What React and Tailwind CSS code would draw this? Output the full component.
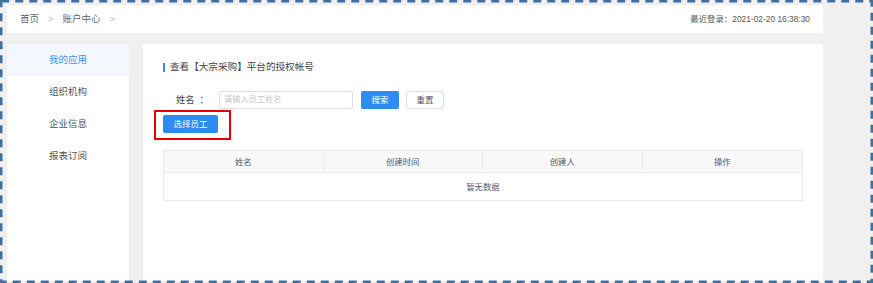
import React from "react";

const font = "font-['Liberation_Sans','Noto_Sans_CJK_SC',sans-serif]";

export default function App() {
  const menu = ["我的应用", "组织机构", "企业信息", "报表订阅"];
  const cols = ["姓名", "创建时间", "创建人", "操作"];
  return (
    <div className={`${font} relative w-[873px] h-[283px] bg-[#f0f0f0] overflow-hidden flex flex-col pl-[7px] pt-[5px] pr-[50px] pb-[2px]`}>
      {/* header */}
      <div className="h-[28px] bg-white flex items-center justify-between pl-[13px] pr-[13px] shrink-0">
        <div className="flex items-center text-[9.5px] leading-[12px] text-[#666]">
          <span>首页</span>
          <span className="mx-[9px] text-[#bbb]">&gt;</span>
          <span>账户中心</span>
          <span className="mx-[9px] text-[#bbb]">&gt;</span>
        </div>
        <div className="text-[8.4px] leading-[12px] text-[#555]">最近登录：2021-02-20 16:38:30</div>
      </div>

      <div className="flex flex-1 mt-[11px] gap-[14px] min-h-0">
        {/* sidebar */}
        <div className="w-[122px] bg-white shrink-0">
          {menu.map((m, i) => (
            <div
              key={m}
              className={`h-[32px] flex items-center justify-center text-[9.5px] leading-[12px] ${
                i === 0 ? "bg-[#f4f8fe] text-[#4a90e2]" : "text-[#555]"
              }`}
            >
              {m}
            </div>
          ))}
        </div>

        {/* main */}
        <div className="flex-1 bg-white pl-[20px] pt-[17px]">
          <div className="flex items-center h-[12px]">
            <div className="w-[2px] h-[9px] bg-[#2d8cf0] mr-[5px]" />
            <span className="text-[9.6px] leading-[12px] text-[#444]">查看【大宗采购】平台的授权帐号</span>
          </div>

          <div className="flex items-center mt-[18px] h-[18px]">
            <div className="w-[56px] pl-[13px] text-[9.2px] leading-[12px] text-[#444] flex">
              <span>姓名</span>
              <span className="ml-[5px]">：</span>
            </div>
            <div className="w-[134px] h-[18px] border border-[#dcdee2] rounded-[2px] flex items-center pl-[4px] text-[8.2px] leading-[10px] text-[#c5c8ce]">
              请输入员工姓名
            </div>
            <div className="ml-[8px] w-[38px] h-[18px] rounded-[2px] bg-[#2d8cf0] text-white flex items-center justify-center text-[8.5px] leading-[10px]">
              搜索
            </div>
            <div className="ml-[7px] w-[38px] h-[18px] rounded-[2px] border border-[#dcdee2] bg-white text-[#515a6e] flex items-center justify-center text-[8.5px] leading-[10px]">
              重置
            </div>
          </div>

          <div className="relative mt-[6px] w-[55px] h-[18px]">
            <div className="w-[55px] h-[18px] rounded-[2px] bg-[#2d8cf0] text-white flex items-center justify-center text-[8.5px] leading-[10px]">
              选择员工
            </div>
            <div className="absolute left-[-9px] top-[-5px] w-[77px] h-[30px] border-2 border-[#e60000]" />
          </div>

          <div className="mt-[17px] w-[640px] border border-[#e8eaec]">
            <div className="grid grid-cols-4 h-[22px] bg-[#f8f8f9] border-b border-[#e8eaec]">
              {cols.map((c, i) => (
                <div
                  key={c}
                  className={`flex items-center justify-center text-[8.4px] leading-[10px] text-[#515a6e] ${
                    i < 3 ? "border-r border-[#e8eaec]" : ""
                  }`}
                >
                  {c}
                </div>
              ))}
            </div>
            <div className="h-[27px] flex items-center justify-center text-[8.4px] leading-[10px] text-[#515a6e]">
              暂无数据
            </div>
          </div>
        </div>
      </div>

      {/* dashed frame overlay */}
      <svg className="absolute inset-0 pointer-events-none" width="873" height="283">
        <rect x="1.25" y="1.25" width="870.5" height="280.5" fill="none" stroke="#41709e" strokeWidth="2.5" strokeDasharray="8 6" />
      </svg>
    </div>
  );
}
